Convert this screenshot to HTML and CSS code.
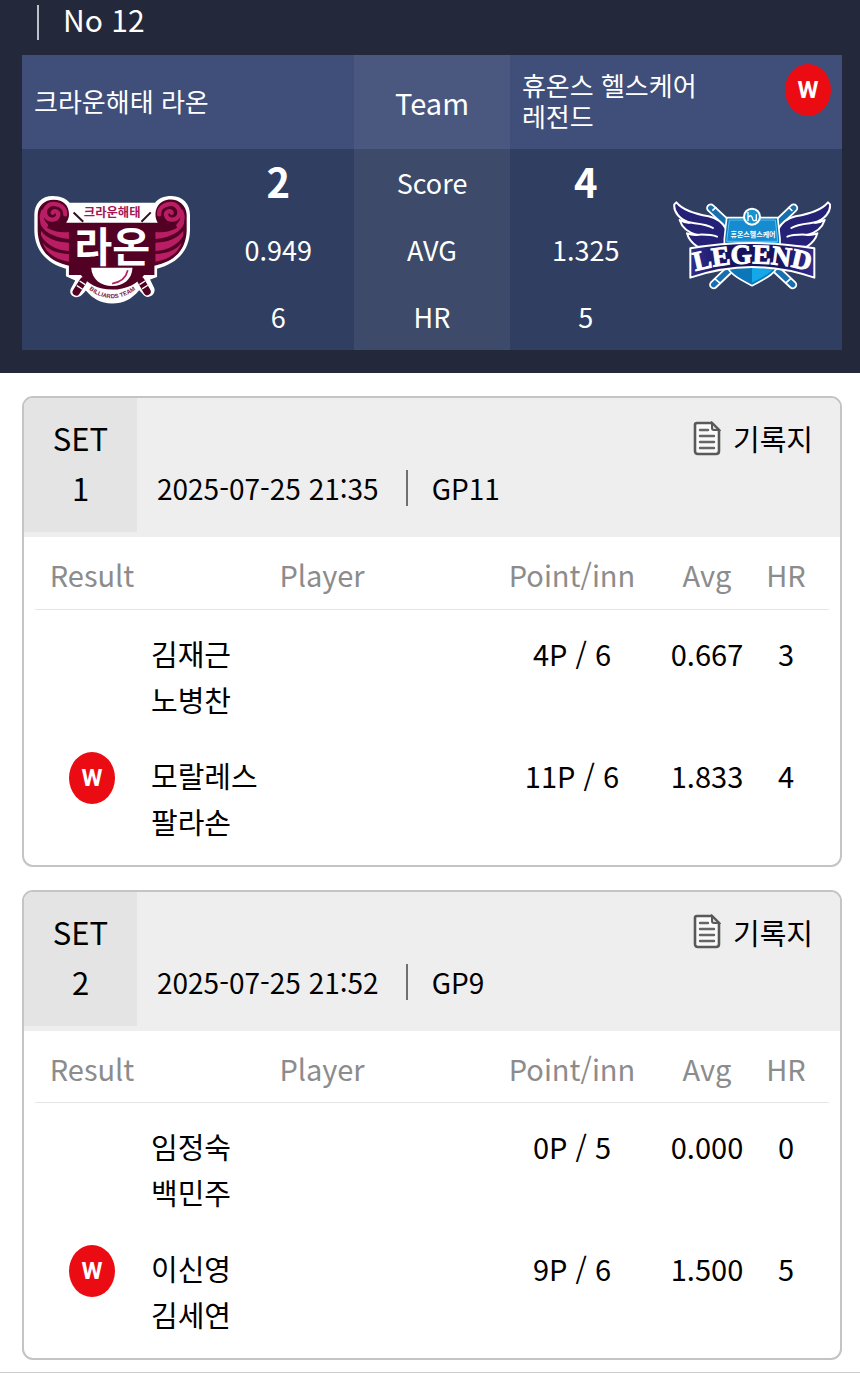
FILE: index.html
```
<!DOCTYPE html>
<html lang="ko">
<head>
  <meta charset="UTF-8">
  <meta name="viewport" content="width=device-width, initial-scale=1.0">
  <title>No 12</title>
  <link rel="stylesheet" href="styles.css">
</head>
<body>
  <!-- Match summary -->
  <header class="match">
    <h1 class="match-no">No 12</h1>

    <table class="score-table">
      <colgroup>
        <col class="col-logo">
        <col class="col-value">
        <col class="col-label">
        <col class="col-value">
        <col class="col-logo">
      </colgroup>
      <thead>
        <tr>
          <th colspan="2"><div class="team"><span>크라운해태 라온</span></div></th>
          <th class="label">Team</th>
          <th colspan="2">
            <div class="team">
              <span>휴온스 헬스케어<br>레전드</span>
              <span class="win">W</span>
            </div>
          </th>
        </tr>
      </thead>
      <tbody>
        <tr>
          <td rowspan="3" class="logo">
            <svg width="157" height="110" viewBox="42 30 472 330" role="img" aria-label="크라운해태 라온">
              <path d="M98 33 C124 33 141 43 149 53 H406 C415 41 432 33 456 33 C491 33 512 59 511 93 V137 C509 196 474 235 412 251 V276 L391 284 L404 311 C407 326 395 337 382 336 C372 335 367 323 358 316 C336 343 310 356 277 356 C242 356 218 341 198 317 C189 327 183 337 169 337 C154 335 147 323 153 311 L166 287 L138 274 V251 C80 236 44 195 43 137 V93 C42 57 64 33 98 33Z" fill="#fff"/>
              <path d="M101 44 C132 44 149 64 147 91 C146 104 139 110 139 113 H414 C401 91 407 61 429 49 C462 32 500 53 501 89 V137 C499 194 465 230 404 242 V270 H373 C353 297 319 314 278 314 C233 314 202 295 183 270 H147 V242 C88 230 55 194 53 137 V91 C53 62 74 44 101 44Z" fill="#520024"/>
              <g fill="#b91d63">
                <path id="ribs" d="M61 96 C69 130 102 145 147 141 V162 C97 156 70 139 61 116Z M63 137 C82 161 108 171 147 173 V198 C107 196 75 177 63 151Z M68 173 C87 196 111 205 147 207 V230 C110 224 79 207 68 173Z"/>
                <use href="#ribs" transform="matrix(-1 0 0 1 554 0)"/>
              </g>
              <g fill="none" stroke="#b91d63" stroke-width="13" stroke-linecap="round">
                <path id="curl" d="M98 83 C103 72 119 81 114 93 C108 108 82 107 76 90 C70 70 86 54 106 57 C126 60 137 73 136 88 M69 80 C62 97 67 112 78 121"/>
                <use href="#curl" transform="matrix(-1 0 0 1 554 0)"/>
              </g>
              <path d="M161 82 L190 110 M393 82 L365 110" stroke="#321020" stroke-width="6"/>
              <path d="M214 248 H338 C337 282 311 303 277 303 C242 303 216 282 214 248Z" fill="#fff"/>
              <path d="M324 256 C318 281 302 292 277 296" fill="none" stroke="#b91d63" stroke-width="5"/>
              <path d="M190 288 L169 321 M364 288 L382 320" stroke="#520024" stroke-width="22" stroke-linecap="round"/>
              <path d="M179 288 L196 299 M171 302 L188 313 M376 288 L359 299 M384 301 L367 312" stroke="#fff" stroke-width="4"/>
              <path id="seam" d="M205 312 Q277 368 350 312" fill="none"/>
              <text class="logo-seam"><textPath href="#seam" startOffset="50%">BILLIARDS TEAM</textPath></text>
              <text class="logo-crown" x="277" y="95">크라운해태</text>
              <text class="logo-raon" x="277" y="231">라온</text>
            </svg>
          </td>
          <td class="score">2</td>
          <th class="label">Score</th>
          <td class="score">4</td>
          <td rowspan="3" class="logo">
            <svg width="158" height="99" viewBox="38 45 474 297" role="img" aria-label="휴온스 헬스케어 레전드">
              <defs>
                <linearGradient id="navy" x1="0" x2="1">
                  <stop offset="0" stop-color="#302d8e"/>
                  <stop offset=".3" stop-color="#17145b"/>
                  <stop offset=".7" stop-color="#17145b"/>
                  <stop offset="1" stop-color="#302d8e"/>
                </linearGradient>
              </defs>
              <!-- cues -->
              <path d="M151 69 L397 299 M400 69 L160 299" stroke="#fff" stroke-width="27" stroke-linecap="round"/>
              <path d="M151 69 L397 299 M400 69 L160 299" stroke="#176fae" stroke-width="16" stroke-linecap="round"/>
              <path d="M156 77 L168 66 M384 66 L396 78 M163 281 L180 295 M375 295 L391 281" stroke="#fff" stroke-width="5"/>
              <!-- wings -->
              <g fill="#242177" stroke="#fff" stroke-width="6" stroke-linejoin="round">
                <path id="wing" d="M48 52 C68 76 102 86 145 94 C173 100 188 115 199 134 V185 H111 C94 174 84 160 80 145 C90 149 101 151 110 150 C82 142 64 125 58 105 C68 111 78 114 88 113 C59 104 39 81 42 58Z"/>
                <use href="#wing" transform="matrix(-1 0 0 1 551 0)"/>
              </g>
              <g fill="none" stroke="#fff" stroke-width="6" stroke-linecap="round">
                <path id="feather" d="M83 112 C108 116 139 116 158 129 M107 149 C128 149 150 147 170 155"/>
                <use href="#feather" transform="matrix(-1 0 0 1 551 0)"/>
              </g>
              <!-- shield -->
              <path d="M199 98 H352 L359 162 V224 C356 262 315 282 275 302 C235 282 197 262 192 224 V162Z" fill="#0b76b8" stroke="#fff" stroke-width="5"/>
              <path d="M275 105 H346 L353 162 V224 C348 254 314 274 275 293Z" fill="#15a8e8"/>
              <path d="M207 105 H345 L352 169 H199Z" fill="#168bd0" stroke="#52c3f2" stroke-width="3"/>
              <circle cx="275" cy="95" r="24" fill="#1594cf" stroke="#fff" stroke-width="6"/>
              <path d="M263 81 V108 M263 98 Q272 86 276 99 Q278 112 288 104 V88 M288 104 V109" fill="none" stroke="#fff" stroke-width="4"/>
              <text class="logo-huons" x="278" y="155">휴온스헬스케어</text>
              <path d="M90 190 Q275 158 462 190 V278 Q275 214 90 278Z" fill="url(#navy)" stroke="#fff" stroke-width="6" stroke-linejoin="round"/>
              <path id="arc" d="M92 262 Q275 208 460 262" fill="none"/>
              <text class="logo-legend"><textPath href="#arc" startOffset="50%">LEGEND</textPath></text>
            </svg>
          </td>
        </tr>
        <tr>
          <td>0.949</td>
          <th class="label">AVG</th>
          <td>1.325</td>
        </tr>
        <tr>
          <td>6</td>
          <th class="label">HR</th>
          <td>5</td>
        </tr>
      </tbody>
    </table>
  </header>

  <!-- Sets -->
  <main class="sets">
    <section class="set">
      <div class="set-head">
        <h2 class="set-no">SET<br>1</h2>
        <div class="set-info">
          <a class="record" href="#">
            <svg width="28" height="35" viewBox="0 0 28 35" aria-hidden="true">
              <path d="M4 2 H19 L26 9 V30 Q26 33 23 33 H5 Q2 33 2 30 V4 Q2 2 4 2Z" fill="#fafafa" stroke="#595959" stroke-width="2.6"/>
              <path d="M19 2 V7 Q19 9 21 9 H26Z" fill="#ddd" stroke="#595959" stroke-width="2"/>
              <path d="M7 9 H15 M7 15 H21 M7 21 H21 M7 27 H21" stroke="#666" stroke-width="2.4" stroke-linecap="round"/>
            </svg>
            기록지
          </a>
          <p class="set-meta"><time>2025-07-25 21:35</time><span class="set-game">GP11</span></p>
        </div>
      </div>
      <table class="result-table">
        <thead>
          <tr>
            <th class="col-result">Result</th>
            <th class="col-player">Player</th>
            <th class="col-point">Point/inn</th>
            <th class="col-avg">Avg</th>
            <th class="col-hr">HR</th>
          </tr>
        </thead>
        <tbody>
          <tr>
            <td></td>
            <td class="player">김재근<br>노병찬</td>
            <td>4P / 6</td>
            <td>0.667</td>
            <td class="hr">3</td>
          </tr>
          <tr>
            <td><span class="win">W</span></td>
            <td class="player">모랄레스<br>팔라손</td>
            <td>11P / 6</td>
            <td>1.833</td>
            <td class="hr">4</td>
          </tr>
        </tbody>
      </table>
    </section>

    <section class="set">
      <div class="set-head">
        <h2 class="set-no">SET<br>2</h2>
        <div class="set-info">
          <a class="record" href="#">
            <svg width="28" height="35" viewBox="0 0 28 35" aria-hidden="true">
              <path d="M4 2 H19 L26 9 V30 Q26 33 23 33 H5 Q2 33 2 30 V4 Q2 2 4 2Z" fill="#fafafa" stroke="#595959" stroke-width="2.6"/>
              <path d="M19 2 V7 Q19 9 21 9 H26Z" fill="#ddd" stroke="#595959" stroke-width="2"/>
              <path d="M7 9 H15 M7 15 H21 M7 21 H21 M7 27 H21" stroke="#666" stroke-width="2.4" stroke-linecap="round"/>
            </svg>
            기록지
          </a>
          <p class="set-meta"><time>2025-07-25 21:52</time><span class="set-game">GP9</span></p>
        </div>
      </div>
      <table class="result-table">
        <thead>
          <tr>
            <th class="col-result">Result</th>
            <th class="col-player">Player</th>
            <th class="col-point">Point/inn</th>
            <th class="col-avg">Avg</th>
            <th class="col-hr">HR</th>
          </tr>
        </thead>
        <tbody>
          <tr>
            <td></td>
            <td class="player">임정숙<br>백민주</td>
            <td>0P / 5</td>
            <td>0.000</td>
            <td class="hr">0</td>
          </tr>
          <tr>
            <td><span class="win">W</span></td>
            <td class="player">이신영<br>김세연</td>
            <td>9P / 6</td>
            <td>1.500</td>
            <td class="hr">5</td>
          </tr>
        </tbody>
      </table>
    </section>
  </main>
</body>
</html>
```
FILE: styles.css
```
* {
  box-sizing: border-box;
}

body {
  margin: 0;
  background: #fff;
  color: #000;
  font-family: "Noto Sans CJK KR", sans-serif;
  font-size: 29px;
}

h1, h2, p {
  margin: 0;
  font-weight: 400;
}

table {
  width: 100%;
  border-collapse: collapse;
  table-layout: fixed;
}

th, td {
  padding: 0;
  font-weight: 400;
  text-align: center;
}

/* Match summary */
.match {
  padding: 5px 18px 23px 22px;
  background: #24283b;
  color: #fff;
}

.match-no {
  margin: 0 0 15px 15px;
  padding: 0 0 6px 24px;
  border-left: 2px solid #bfc1ca;
  font-size: 30px;
  line-height: 29px;
}

.col-logo {
  width: 22%;
}

.col-label {
  width: 19%;
}

.score-table thead th {
  height: 94px;
  background: #3f4f79;
}

.score-table tbody {
  background: #303f61;
  font-size: 27px;
}

.score-table tbody td,
.score-table tbody th {
  height: 67px;
  line-height: 40px;
}

.score-table thead .label {
  background: #4a5880;
}

.score-table tbody .label {
  background: #3d4a69;
}

.team {
  display: flex;
  align-items: center;
  justify-content: space-between;
  height: 94px;
  padding: 9px 11px 13px 12px;
  font-size: 26px;
  line-height: 31px;
  text-align: left;
}

.team .win {
  align-self: flex-start;
}

.score-table .score {
  padding-bottom: 4px;
  font-size: 40px;
  font-weight: 700;
}

.logo svg {
  display: block;
  margin: 0 auto;
}

.logo text {
  fill: #fff;
  font-weight: 700;
  text-anchor: middle;
}

.logo .logo-crown {
  fill: #a51556;
  font-size: 37px;
}

.logo .logo-raon {
  font-size: 124px;
}

.logo .logo-seam {
  fill: #7b1442;
  font-family: "Liberation Sans", sans-serif;
  font-size: 18px;
}

.logo .logo-huons {
  font-size: 21px;
}

.logo .logo-legend {
  font-family: "Liberation Serif", serif;
  font-size: 82px;
  stroke: #fff;
  stroke-width: 3px;
}

/* Winner mark */
.win {
  display: inline-block;
  width: 46px;
  height: 52px;
  border-radius: 50%;
  background: #eb0c13;
  color: #fff;
  font-family: Roboto, sans-serif;
  font-size: 24px;
  font-weight: 700;
  line-height: 52px;
  text-align: center;
  vertical-align: top;
}

/* Sets */
.sets {
  display: flex;
  flex-direction: column;
  gap: 23px;
  padding: 23px 18px 12px 22px;
  border-bottom: 1px solid #ccc;
}

.set {
  overflow: hidden;
  padding-bottom: 6px;
  border: 2px solid #c4c4c4;
  border-radius: 11px;
}

.set-head {
  display: flex;
  align-items: flex-start;
  padding-bottom: 5px;
  background: #eee;
}

.set-no {
  width: 113px;
  padding: 15px 0 19px;
  background: #e4e4e4;
  font-size: 31px;
  line-height: 50px;
  text-align: center;
}

.set-info {
  display: flex;
  flex: 1;
  flex-direction: column;
  padding: 15px 27px 0 20px;
  line-height: 50px;
}

.record {
  display: flex;
  align-items: center;
  align-self: flex-end;
  gap: 12px;
  color: #000;
  text-decoration: none;
}

.set-meta {
  display: flex;
  align-items: center;
  font-size: 28px;
}

.set-game {
  margin-left: 27px;
  padding-left: 24px;
  border-left: 2px solid #707070;
  line-height: 36px;
}

.result-table {
  width: auto;
  min-width: calc(100% - 22px);
  margin: 0 11px;
}

.result-table thead {
  border-bottom: 1px solid #e5e5e5;
  color: #8c8c8c;
}

.result-table thead th {
  height: 72px;
  padding-top: 3px;
}

.col-result {
  width: 114px;
}

.col-point {
  width: 154px;
}

.col-avg {
  width: 116px;
}

.col-hr {
  width: 64px;
}

.result-table .col-hr,
.result-table .hr {
  padding-right: 22px;
}

.result-table td {
  padding: 15px 0;
  line-height: 46px;
  vertical-align: top;
}

.result-table tbody tr:first-child td {
  padding-top: 20px;
}

.result-table .player {
  padding-left: 2px;
  text-align: left;
}
```
